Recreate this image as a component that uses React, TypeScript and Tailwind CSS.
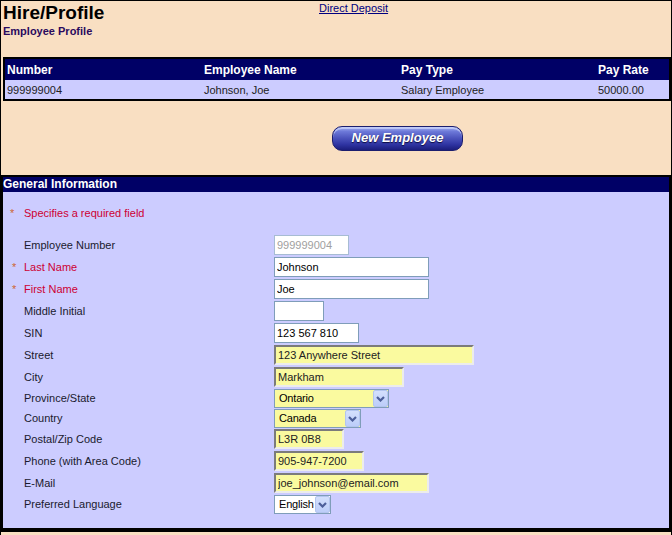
import { ChangeEvent, useState } from 'react'

type Field = {
  key: string
  label: string
  value: string
  required?: boolean
  kind: 'disabled' | 'white' | 'yellow' | 'select-yellow' | 'select-white'
  width: string
  options?: string[]
}

const fields: Field[] = [
  { key: 'empNo', label: 'Employee Number', value: '999999004', kind: 'disabled', width: 'w-[75px]' },
  { key: 'last', label: 'Last Name', value: 'Johnson', required: true, kind: 'white', width: 'w-[155px]' },
  { key: 'first', label: 'First Name', value: 'Joe', required: true, kind: 'white', width: 'w-[155px]' },
  { key: 'middle', label: 'Middle Initial', value: '', kind: 'white', width: 'w-[50px]' },
  { key: 'sin', label: 'SIN', value: '123 567 810', kind: 'white', width: 'w-[85px]' },
  { key: 'street', label: 'Street', value: '123 Anywhere Street', kind: 'yellow', width: 'w-[200px]' },
  { key: 'city', label: 'City', value: 'Markham', kind: 'yellow', width: 'w-[130px]' },
  {
    key: 'province',
    label: 'Province/State',
    value: 'Ontario',
    kind: 'select-yellow',
    width: 'w-[115px]',
    options: ['Alberta', 'British Columbia', 'Ontario', 'Quebec'],
  },
  { key: 'country', label: 'Country', value: 'Canada', kind: 'select-yellow', width: 'w-[87px]', options: ['Canada', 'USA'] },
  { key: 'postal', label: 'Postal/Zip Code', value: 'L3R 0B8', kind: 'yellow', width: 'w-[70px]' },
  { key: 'phone', label: 'Phone (with Area Code)', value: '905-947-7200', kind: 'yellow', width: 'w-[90px]' },
  { key: 'email', label: 'E-Mail', value: 'joe_johnson@email.com', kind: 'yellow', width: 'w-[155px]' },
  {
    key: 'lang',
    label: 'Preferred Language',
    value: 'English',
    kind: 'select-white',
    width: 'w-[57px]',
    options: ['English', 'French'],
  },
]

const inputClass = {
  disabled: 'h-[20px] border border-[#a7bcd3] bg-white text-[#a0a0a0] px-[2px]',
  white: 'h-[20px] border border-[#7f9db9] bg-white text-black px-[2px]',
  yellow:
    'h-[20px] border-2 border-t-[#7b7b7b] border-l-[#7b7b7b] border-b-[#ececec] border-r-[#ececec] bg-[#fafa9f] text-[#222] px-[2px]',
}

function Chevron() {
  return (
    <span className="absolute right-[1px] top-[1px] bottom-[1px] w-[15px] rounded-[2px] border border-[#b3c5ef] bg-[linear-gradient(to_bottom,#d4e0fd,#bccdf9)] flex items-center justify-center pointer-events-none">
      <svg width="9" height="6" viewBox="0 0 9 6">
        <path d="M1 1 L4.5 4.5 L8 1" fill="none" stroke="#4d5f9a" strokeWidth="2.2" />
      </svg>
    </span>
  )
}

export default function App() {
  const [form, setForm] = useState<Record<string, string>>(
    Object.fromEntries(fields.map((f) => [f.key, f.value]))
  )

  const update = (key: string) => (e: ChangeEvent<HTMLInputElement | HTMLSelectElement>) =>
    setForm({ ...form, [key]: e.target.value })

  return (
    <div className="w-[672px] h-[535px] overflow-hidden bg-[#f9dfc2] border-l border-t border-r border-black font-['Liberation_Sans',Arial,sans-serif]">
      {/* Page header */}
      <div className="h-[56px] flex">
        <div className="w-[318px] shrink-0 pl-[2px]">
          <h1 className="mt-[2px] text-[19px] leading-[20px] font-bold text-black">Hire/Profile</h1>
          <div className="mt-[2px] text-[11px] leading-[13px] font-bold text-[#2a0a5e]">Employee Profile</div>
        </div>
        <a href="#" className="mt-[1px] h-[14px] text-[11px] leading-[13px] text-[#000080] underline">
          Direct Deposit
        </a>
      </div>

      {/* Employee summary */}
      <div className="ml-[2px] border-2 border-black">
        <div className="h-[21px] grid grid-cols-[197px_197px_197px_1fr] items-center bg-[#000066] text-white text-[12px] font-bold">
          <div className="pl-[2px]">Number</div>
          <div className="pl-[2px]">Employee Name</div>
          <div className="pl-[2px]">Pay Type</div>
          <div className="pl-[2px]">Pay Rate</div>
        </div>
        <div className="h-[19px] grid grid-cols-[197px_197px_197px_1fr] items-center bg-[#ccccff] text-[#222] text-[11px]">
          <div className="pl-[2px] pt-[1px]">999999004</div>
          <div className="pl-[2px] pt-[1px]">Johnson, Joe</div>
          <div className="pl-[2px] pt-[1px]">Salary Employee</div>
          <div className="pl-[2px] pt-[1px]">50000.00</div>
        </div>
      </div>

      <div className="h-[74px] flex items-center">
        <button className="ml-[331px] w-[131px] h-[25px] rounded-[10px] border border-[#1c1e6e] bg-[linear-gradient(to_bottom,#a4b1f3_0%,#6c78d8_20%,#4c54bd_48%,#2f34a2_76%,#1b1d7c_100%)] shadow-[inset_0_2px_0_rgba(220,228,255,0.55)] text-white text-[13px] font-bold italic [text-shadow:0_1px_1px_#0a0a40]">
          New Employee
        </button>
      </div>

      {/* General information */}
      <div className="border-x-2 border-t-2 border-b-4 border-black">
        <div className="h-[15px] bg-[#000066] text-white text-[12px] leading-[15px] font-bold">General Information</div>
        <div className="h-[336px] bg-[#ccccff] text-[11px] leading-[13px]">
          <div className="pt-[15px] flex">
            <span className="w-[21px] pl-[7px] text-[#cc6633]">*</span>
            <span className="text-[#cc0033]">Specifies a required field</span>
          </div>

          <div className="mt-[15px]">
            {fields.map((f) => {
              const isSelect = f.kind === 'select-yellow' || f.kind === 'select-white'
              return (
                <div
                  key={f.key}
                  className={`grid grid-cols-[21px_250px_1fr] ${isSelect ? 'h-[20px]' : 'h-[22px]'}`}
                >
                  <div className={`${isSelect ? 'h-[19px]' : 'h-[20px]'} flex items-center pl-[9px] text-[#cc6633]`}>
                    {f.required ? '*' : ''}
                  </div>
                  <label
                    className={`${isSelect ? 'h-[19px]' : 'h-[20px]'} flex items-center ${
                      f.required ? 'text-[#cc0033]' : 'text-[#1a1a2e]'
                    }`}
                  >
                    {f.label}
                  </label>
                  <div>
                    {isSelect ? (
                      <div className={`relative ${f.width} h-[19px]`}>
                        <select
                          value={form[f.key]}
                          onChange={update(f.key)}
                          className={`appearance-none w-full h-full border border-[#7f9db9] pl-[4px] text-[11px] tracking-[-0.2px] text-black ${
                            f.kind === 'select-yellow' ? 'bg-[#fafa9f]' : 'bg-white'
                          }`}
                        >
                          {f.options?.map((o) => (
                            <option key={o} value={o}>
                              {o}
                            </option>
                          ))}
                        </select>
                        <Chevron />
                      </div>
                    ) : (
                      <input
                        type="text"
                        value={form[f.key]}
                        onChange={update(f.key)}
                        disabled={f.kind === 'disabled'}
                        className={`${f.width} ${inputClass[f.kind as 'disabled' | 'white' | 'yellow']} text-[11px] block`}
                      />
                    )}
                  </div>
                </div>
              )
            })}
          </div>
        </div>
      </div>
    </div>
  )
}
